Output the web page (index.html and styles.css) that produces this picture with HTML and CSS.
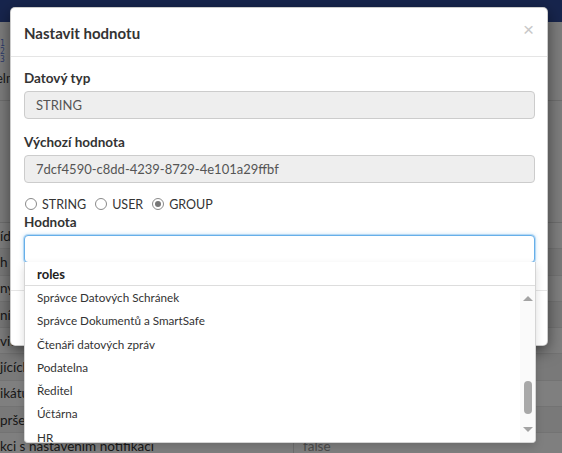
FILE: index.html
```html
<!DOCTYPE html>
<html lang="cs">
<head>
<meta charset="utf-8">
<title>Nastavit hodnotu</title>
<link rel="stylesheet" href="styles.css">
</head>
<body>
<div class="page">
  <header class="topbar"></header>
  <div class="intro">
    <div class="code"><span>1 -</span><span>2 -</span><span>3 -</span></div>
    <div class="elm">elm</div>
  </div>
  <div class="gap"></div>
  <div class="grid">
    <div class="row"><span class="key">ída</span><span class="val"></span></div>
    <div class="row alt"><span class="key">h</span><span class="val"></span></div>
    <div class="row"><span class="key">ny</span><span class="val"></span></div>
    <div class="row alt"><span class="key">nís</span><span class="val"></span></div>
    <div class="row"><span class="key">vidu</span><span class="val"></span></div>
    <div class="row alt"><span class="key">jících</span><span class="val"></span></div>
    <div class="row"><span class="key">ikátu</span><span class="val"></span></div>
    <div class="row alt"><span class="key">pršen</span><span class="val"></span></div>
    <div class="row"><span class="key">kci s nastavením notifikací</span><span class="val">false</span></div>
  </div>
</div>
<div class="backdrop"></div>
<div class="modal">
  <div class="modal-header">
    <h4 class="modal-title">Nastavit hodnotu</h4>
    <span class="close">×</span>
  </div>
  <div class="modal-body">
    <div class="form-group">
      <label class="label">Datový typ</label>
      <div class="input readonly">STRING</div>
    </div>
    <div class="form-group">
      <label class="label">Výchozí hodnota</label>
      <div class="input readonly">7dcf4590-c8dd-4239-8729-4e101a29ffbf</div>
    </div>
    <div class="radios">
      <span class="radio"></span><span class="rlabel">STRING</span>
      <span class="radio"></span><span class="rlabel">USER</span>
      <span class="radio checked"></span><span class="rlabel">GROUP</span>
    </div>
    <div class="form-group last">
      <label class="label">Hodnota</label>
      <div class="input focused"></div>
    </div>
  </div>
  <div class="modal-footer"></div>
</div>
<div class="dropdown">
  <div class="dd-header">roles</div>
  <div class="dd-body">
    <ul class="dd-list">
      <li>Správce Datových Schránek</li>
      <li>Správce Dokumentů a SmartSafe</li>
      <li>Čtenáři datových zpráv</li>
      <li>Podatelna</li>
      <li>Ředitel</li>
      <li>Účtárna</li>
      <li>HR</li>
    </ul>
    <div class="scrollbar">
      <span class="arrow up"></span>
      <span class="track"><span class="thumb"></span></span>
      <span class="arrow down"></span>
    </div>
  </div>
</div>
</body>
</html>
```
FILE: styles.css
```css
* { box-sizing: border-box; }
html, body { margin: 0; padding: 0; }
body {
  width: 562px;
  height: 453px;
  overflow: hidden;
  font-family: Lato, "Noto Sans", sans-serif;
  font-size: 13px;
  color: #333;
  background: #fbfbfb;
  position: relative;
}

/* background page */
.page { display: flex; flex-direction: column; }
.topbar { height: 22px; background: #2e4a9a; }
.intro { height: 79px; border-bottom: 1px solid #ddd; display: flex; flex-direction: column; }
.code {
  display: flex; flex-direction: column;
  margin-top: 18px;
  font-family: "DejaVu Sans Mono", monospace;
  font-size: 8px; line-height: 8px;
  color: #5a78d8;
}
.elm { margin-top: 6px; font-size: 13px; color: #333; margin-left: -4px; }
.gap { height: 122px; border-bottom: 1px solid #ddd; }
.grid { display: flex; flex-direction: column; }
.row {
  height: 26.3px;
  display: flex;
  align-items: center;
  background: #fff;
  border-bottom: 1px solid #e6e6e6;
  font-size: 13.5px;
  color: #333;
}
.row.alt { background: #f3f3f3; }
.key { width: 293px; white-space: nowrap; }
.val { flex: 1; align-self: stretch; display: flex; align-items: center; border-left: 1px solid #ddd; padding-left: 9px; color: #999; }

.backdrop {
  position: absolute; inset: 0;
  background: rgba(0,0,0,0.5);
}

/* modal */
.modal {
  position: absolute;
  left: 10px; top: 7px;
  width: 538px;
  background: #fff;
  border: 1px solid rgba(0,0,0,0.2);
  border-radius: 5px;
  box-shadow: 0 5px 15px rgba(0,0,0,0.5);
  display: flex; flex-direction: column;
}
.modal-header {
  height: 49px;
  padding: 0 13px;
  border-bottom: 1px solid #e5e5e5;
  display: flex; align-items: center; justify-content: space-between;
}
.modal-title {
  margin: 0;
  font-size: 15px;
  font-weight: 700;
  color: #333;
  line-height: 20px;
  padding-top: 1px;
}
.close {
  font-family: "Liberation Sans", Arial, sans-serif;
  font-size: 19px;
  font-weight: 400;
  color: #c8c8c8;
  line-height: 1;
  margin-right: 0;
  margin-top: -6px;
}
.modal-body { padding: 12px 12px 27px 13px; display: flex; flex-direction: column; }
.form-group { display: flex; flex-direction: column; margin-bottom: 14px; }
.form-group.last { margin-bottom: 0; }
.label { font-weight: 700; font-size: 13.5px; line-height: 18px; margin-bottom: 4px; color: #333; }
.input {
  height: 28px;
  border: 1px solid #ccc;
  border-radius: 4px;
  padding: 0 11px;
  display: flex; align-items: center;
  font-size: 13px;
  color: #555;
  background: #fff;
}
.input.readonly { background: #eee; }
.input.focused {
  border-color: #66afe9;
  box-shadow: 0 0 0 1px rgba(102,175,233,0.35), 0 0 4px rgba(102,175,233,0.5);
}
.radios {
  display: flex; align-items: center;
  height: 18px;
  margin-top: -2px;
  margin-bottom: 0;
  font-size: 12.5px;
  color: #333;
}
.radio {
  width: 12px; height: 12px;
  border: 1px solid #8a8a8a;
  border-radius: 50%;
  background: #fff;
  margin-left: 1px;
  margin-right: 5px;
  display: flex; align-items: center; justify-content: center;
}
.radio.checked::after {
  content: "";
  width: 6px; height: 6px; border-radius: 50%;
  background: #777;
}
.rlabel { margin-right: 8px; }
.modal-footer {
  height: 55px;
  border-top: 1px solid #e5e5e5;
}

/* dropdown */
.dropdown {
  position: absolute;
  left: 24px; top: 262px;
  width: 512px; height: 181px;
  background: #fff;
  border: 1px solid #d5d5d5;
  border-top: none;
  border-radius: 0 0 4px 4px;
  box-shadow: 0 4px 8px rgba(0,0,0,0.15);
  display: flex; flex-direction: column;
  overflow: hidden;
}
.dd-header {
  height: 24px;
  flex: none;
  padding-left: 12px;
  display: flex; align-items: center;
  font-weight: 700;
  color: #222;
  border-bottom: 1px solid #ddd;
  font-size: 13px;
}
.dd-body { flex: 1; display: flex; min-height: 0; }
.dd-list {
  flex: 1;
  list-style: none;
  margin: 0; padding: 0;
  overflow: hidden;
}
.dd-list li {
  height: 23.3px;
  line-height: 23.3px;
  padding-left: 12px;
  color: #333;
  font-size: 11.7px;
  white-space: nowrap;
}
.scrollbar {
  width: 15px;
  flex: none;
  background: #fafafa;
  display: flex; flex-direction: column; align-items: center;
}
.arrow { width: 0; height: 0; border-left: 5px solid transparent; border-right: 5px solid transparent; }
.arrow.up { border-bottom: 5px solid #a3a3a3; margin-top: 10px; }
.arrow.down { border-top: 5px solid #a3a3a3; margin-bottom: 10px; }
.track { flex: 1; width: 100%; display: flex; flex-direction: column; justify-content: flex-end; align-items: center; padding-bottom: 13px; }
.thumb { width: 8px; height: 33px; border-radius: 4px; background: #a8a8a8; }
```
